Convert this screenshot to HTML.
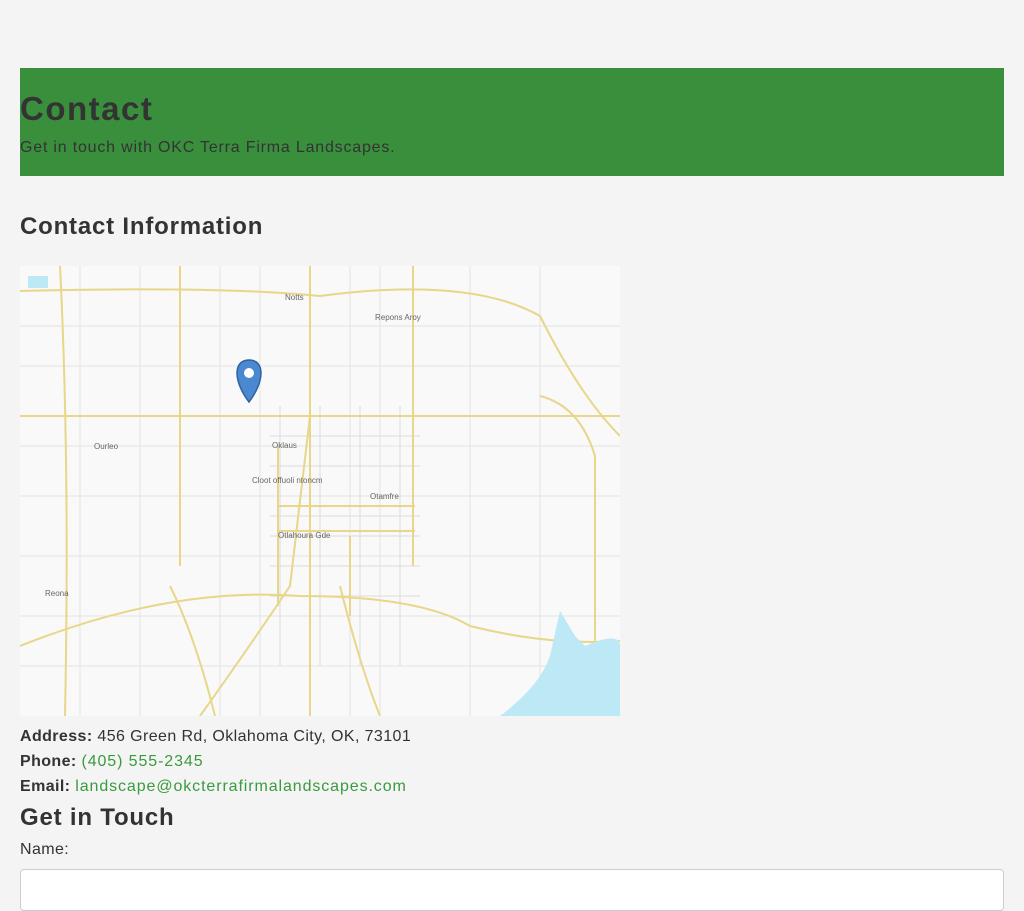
<!DOCTYPE html>
<html><head><meta charset="utf-8"><style>
body{margin:0;background:#f4f4f4;font-family:"Liberation Sans",sans-serif;color:#333;}
.hdr{position:absolute;left:20px;top:68px;width:984px;height:108px;background:#3a8f3d;}
h1{font-size:33px;font-weight:bold;margin:0;position:absolute;left:20px;top:90px;letter-spacing:1.5px}
.sub{position:absolute;left:20px;top:139px;font-size:16px;letter-spacing:0.8px}
h2{position:absolute;left:20px;margin:0;font-size:24px;font-weight:bold;letter-spacing:0.8px}
.t{position:absolute;left:20px;font-size:16px;letter-spacing:0.4px}
a{color:#3a9a3d;text-decoration:none;letter-spacing:0.9px}
.inp{position:absolute;left:20px;top:869px;width:982px;height:40px;background:#fff;border:1px solid #ccc;border-radius:4px;}
</style></head><body>
<div class="hdr"></div>
<h1>Contact</h1>
<div class="sub">Get in touch with OKC Terra Firma Landscapes.</div>
<h2 style="top:213px">Contact Information</h2>
<svg style="position:absolute;left:20px;top:266px" width="600" height="450" viewBox="0 0 600 450">
<rect width="600" height="450" fill="#f8f9f8"/>
<g stroke="#e4e4e4" stroke-width="1">
<path d="M0 60H600M0 100H600M0 180H600M0 230H600M0 290H600M0 350H600M0 400H600M60 0V450M120 0V450M200 0V450M240 0V450M330 0V450M360 0V450M450 0V450M520 0V450"/>
</g>
<g stroke="#dcdcdc" stroke-width="1">
<path d="M250 150H400M250 170H400M250 200H400M250 250H400M250 270H400M250 300H400M250 330H400M260 140V400M300 140V400M340 140V400M380 140V400"/>
</g>
<g stroke="#e8d68a" stroke-width="2" fill="none">
<path d="M0 150H600"/>
<path d="M290 0V450"/>
<path d="M393 0V300"/>
<path d="M160 0V300"/>
<path d="M40 0Q50 200 45 450"/>
<path d="M0 25Q200 20 300 30Q450 10 520 50Q560 130 600 170"/>
<path d="M0 380Q150 320 280 330Q400 330 450 360Q530 380 600 375"/>
<path d="M180 450Q230 380 270 320L290 150"/>
<path d="M150 320Q175 370 195 450"/>
<path d="M320 320Q340 400 360 450"/>
<path d="M258 180V340M258 240H395M258 265H395M330 270V350"/>
<path d="M520 130Q560 140 575 190V450"/>
</g>
<path d="M540 345 L555 370 L565 380 Q600 365 600 380 V450 H480 Q520 420 530 390 Z" fill="#bde8f5"/>
<rect x="8" y="10" width="20" height="12" fill="#bde8f5"/>
<g font-size="8" fill="#666" font-family="Liberation Sans,sans-serif">
<text x="265" y="34">Notts</text><text x="355" y="54">Repons Aroy</text>
<text x="252" y="182">Oklaus</text><text x="232" y="217">Cloot offuoli ntoncm</text>
<text x="350" y="233">Otamfre</text><text x="258" y="272">Otlahoura Gde</text>
<text x="74" y="183">Ourleo</text><text x="25" y="330">Reona</text>
</g>
<path d="M229 136 C213 115 213 94 229 94 C245 94 245 115 229 136Z" fill="#4a88cf" stroke="#2f62a0" stroke-width="1.5"/>
<circle cx="229" cy="107" r="5" fill="#fff"/>
</svg>
<div class="t" style="top:728px"><b>Address:</b> 456 Green Rd, Oklahoma City, OK, 73101</div>
<div class="t" style="top:753px"><b>Phone:</b> <a>(405) 555-2345</a></div>
<div class="t" style="top:778px"><b>Email:</b> <a>landscape@okcterrafirmalandscapes.com</a></div>
<h2 style="top:804px">Get in Touch</h2>
<div class="t" style="top:841px">Name:</div>
<div class="inp"></div>
</body></html>
